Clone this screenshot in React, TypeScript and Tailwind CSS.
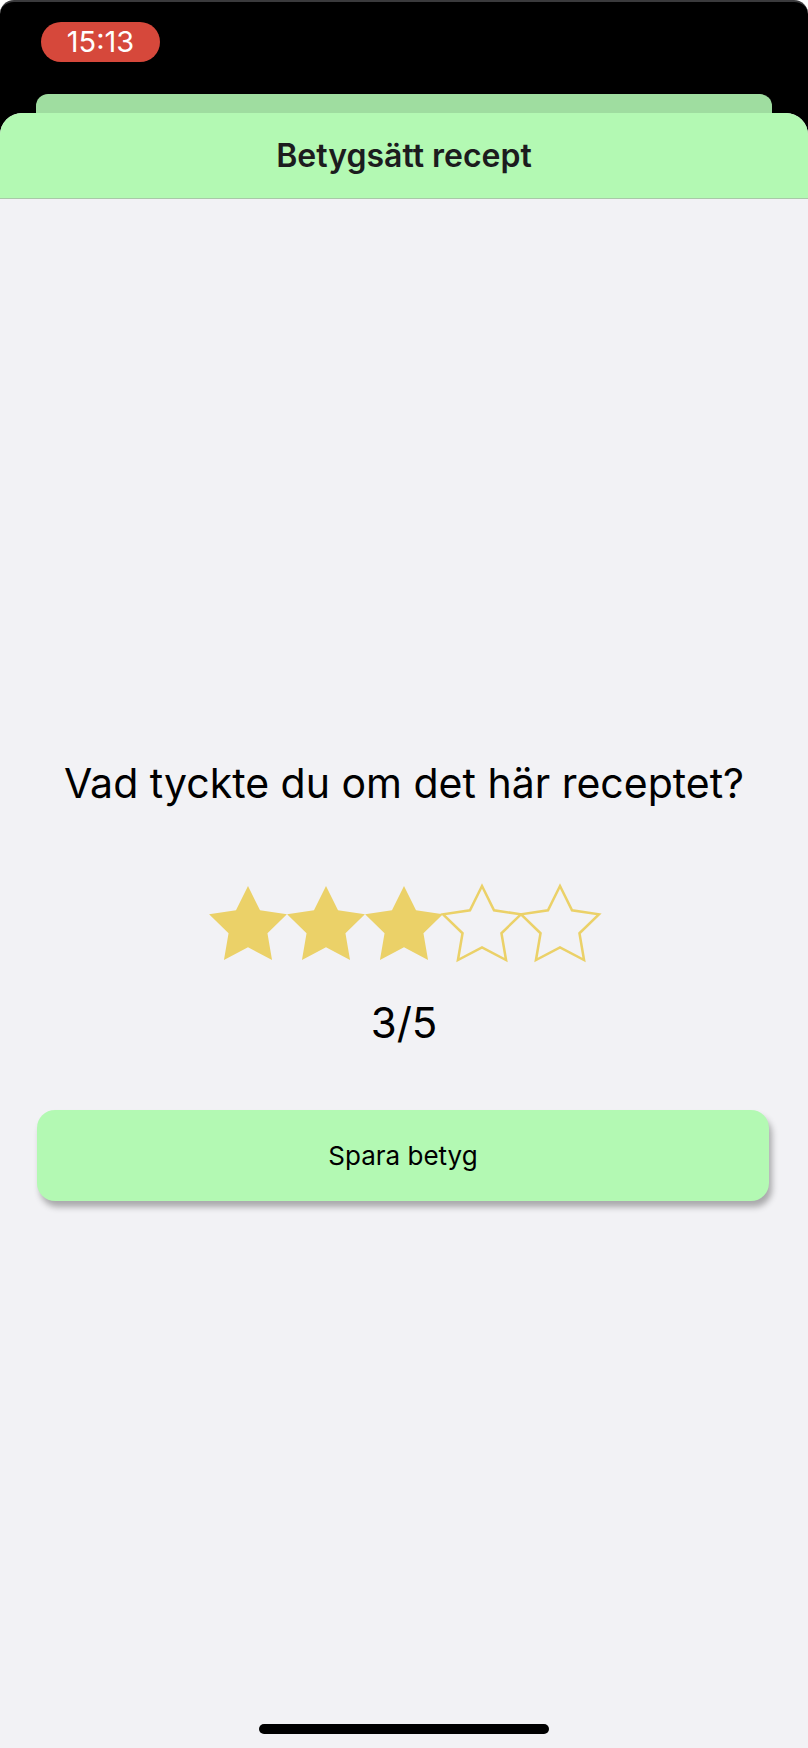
import { useState } from "react";

const STAR = "M12 2l3.09 6.26L22 9.27l-5 4.87 1.18 6.88L12 17.77l-6.18 3.25L7 14.14 2 9.27l6.91-1.01L12 2z";

function Star({ filled }: { filled: boolean }) {
    return (
        <svg viewBox="2 2 20 19.02" className="w-[78px] h-[74px] overflow-visible">
            <path
                d={STAR}
                fill={filled ? "#ebd168" : "none"}
                stroke="#ebd168"
                strokeWidth={filled ? 0 : 0.65}
                strokeLinejoin="miter"
            />
        </svg>
    );
}

export default function App() {
    const [rating, setRating] = useState(3);

    return (
        <div className="h-[1748px] w-[808px] bg-black flex flex-col rounded-t-[14px] border-t-2 border-[#3a3a3c] overflow-hidden font-['Inter','Liberation_Sans',sans-serif]">
            {/* status bar */}
            <div className="h-[92px] pl-[41px] pt-[20px]">
                <div className="w-[119px] h-[40px] rounded-full bg-[#d6483b] flex items-center justify-center text-white text-[29px]">
                    15:13
                </div>
            </div>

            {/* stacked card behind */}
            <div className="mx-[36px] h-[19px] rounded-t-[12px] bg-[#9fdda0]" />

            {/* sheet */}
            <div className="flex-1 flex flex-col rounded-t-[22px] bg-[#f2f2f5] overflow-hidden">
                <div className="h-[86px] bg-[#b3f9b3] border-b border-[#a9c8a9] flex items-center justify-center">
                    <h1 className="text-[32px] font-semibold text-[#1c1c1e]">Betygsätt recept</h1>
                </div>

                <div className="flex flex-col items-center pt-[562px]">
                    <p className="text-[41px] leading-[44px] text-black">Vad tyckte du om det här receptet?</p>

                    <div className="flex mt-[81px]">
                        {[1, 2, 3, 4, 5].map((n) => (
                            <button key={n} onClick={() => setRating(n)} className="p-0">
                                <Star filled={n <= rating} />
                            </button>
                        ))}
                    </div>

                    <div className="mt-[40px] text-[42px] leading-[46px] text-black">{rating}/5</div>
                </div>

                <div className="px-[37px] pr-[39px] mt-[64px]">
                    <button className="w-full h-[91px] rounded-[18px] bg-[#b3f9b3] shadow-[3px_6px_6px_rgba(0,0,0,0.3)] text-[26px] text-black">
                        Spara betyg
                    </button>
                </div>

                <div className="mt-auto mb-[14px] flex justify-center">
                    <div className="w-[290px] h-[10px] rounded-full bg-black" />
                </div>
            </div>
        </div>
    );
}
